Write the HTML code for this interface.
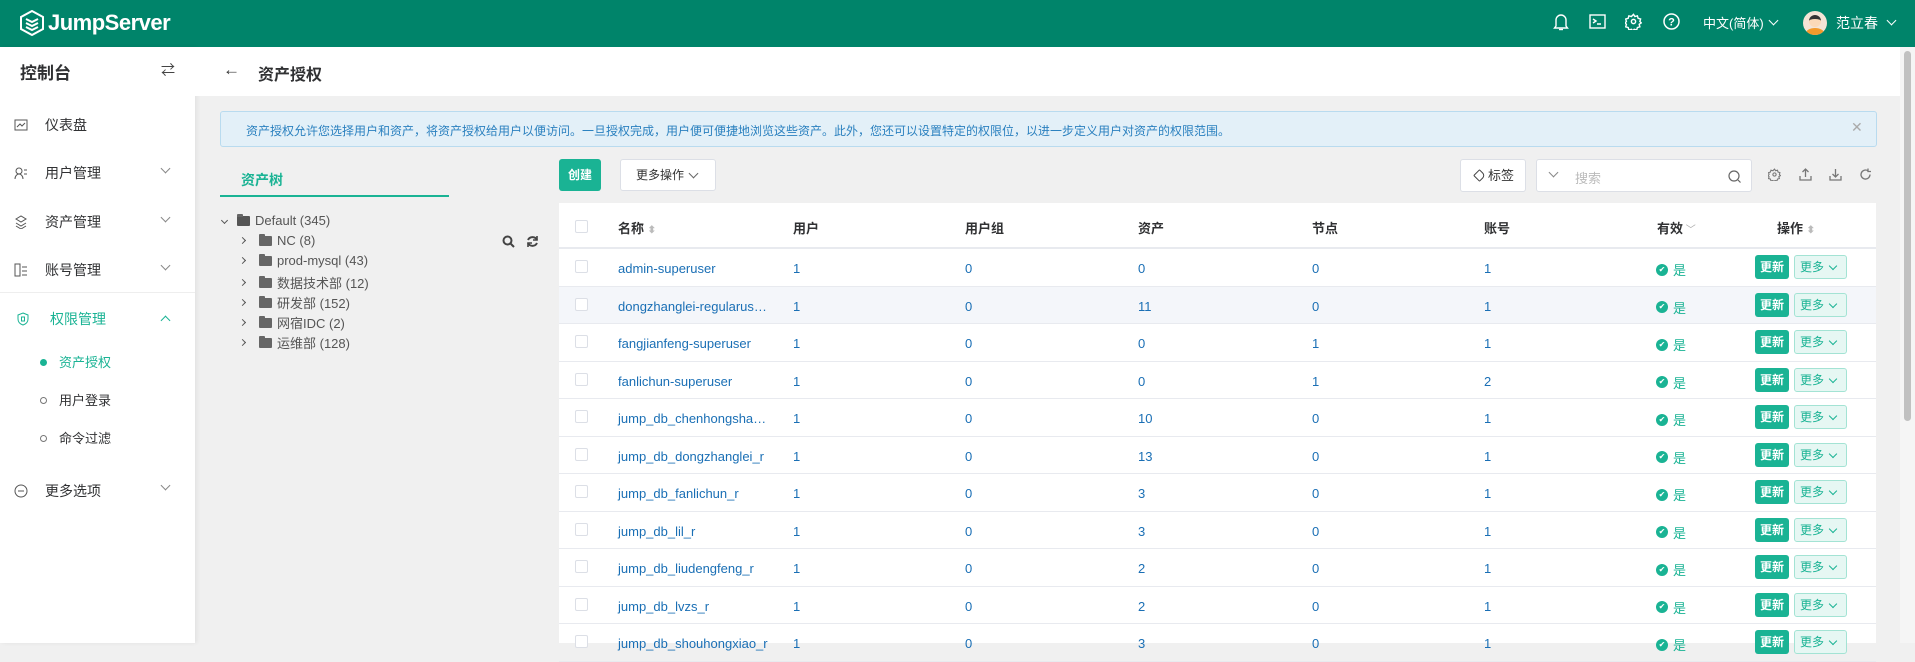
<!DOCTYPE html>
<html><head><meta charset="utf-8"><style>
*{box-sizing:border-box;margin:0;padding:0}
body{width:1915px;height:643px;overflow:hidden;background:#f0f0f0;font-family:"Liberation Sans","Noto Sans CJK SC",sans-serif;color:#606266;font-size:13px;position:relative}
.a{position:absolute}
.hdr{left:0;top:0;width:1915px;height:47px;background:#00846a}
.side{left:0;top:47px;width:195px;height:596px;background:#fff;box-shadow:2px 0 4px rgba(0,0,0,.06)}
.mi{position:absolute;left:14px;font-size:14px;color:#303133;display:flex;align-items:center}
.mi svg{margin-right:17px}
.chev{position:absolute;left:162px;width:7px;height:7px;border-right:1px solid #888;border-bottom:1px solid #888;transform:rotate(45deg)}
.sub{position:absolute;left:59px;font-size:13px;color:#303133}
.sub:before{content:"";position:absolute;left:-19px;top:7px;width:5px;height:5px;border:1px solid #777;border-radius:50%}
.sub.on:before{background:#1ab394;border-color:#1ab394}
.tree{font-size:13px;color:#555;position:absolute;left:0;display:flex;align-items:center}
.fold{display:inline-block;width:13px;height:10px;background:#666;border-radius:1px;margin-right:5px;position:relative}
.fold:before{content:"";position:absolute;left:0;top:-2px;width:6px;height:3px;background:#666;border-radius:1px 1px 0 0}
.tarr{display:inline-block;width:5px;height:5px;border-right:1.3px solid #555;border-bottom:1.3px solid #555;transform:rotate(-45deg);margin-right:14px}
.tbl{left:559px;top:203px;width:1317px;height:440px;background:#fff}
.row{position:absolute;left:0;width:1317px;height:37.5px;border-bottom:1px solid #e8eaef;font-size:13px}
.row span{position:absolute;top:12px;color:#1a6fb5}
.cb{position:absolute;left:16px;top:11px;width:13px;height:13px;border:1px solid #dcdfe6;border-radius:2px;background:#fff}
.row span.yes{color:#1ab394;left:1097px;top:11px;display:flex;align-items:center}
.yes:before{content:"✔";display:inline-block;width:12px;height:12px;border-radius:50%;background:#1ab394;color:#fff;font-size:8px;line-height:12px;text-align:center;margin-right:5px}
.b1{position:absolute;left:1196px;top:6px;width:34px;height:24px;background:#1ab394;border-radius:3px;color:#fff;font-size:12px;line-height:24px;text-align:center;font-weight:bold}
.b2{position:absolute;left:1235px;top:6px;width:53px;height:24px;background:#e6f7f3;border:1px solid #a3e3d4;border-radius:3px;color:#1ab394;font-size:12px;line-height:22px;padding-left:5px}
.b2:after{content:"";position:absolute;right:10px;top:7px;width:5px;height:5px;border-right:1px solid #1ab394;border-bottom:1px solid #1ab394;transform:rotate(45deg)}
.th{position:absolute;top:15px;font-size:13px;color:#303133;font-weight:bold}
</style></head><body>
<div class="a hdr">
 <svg class="a" style="left:20px;top:10px" width="24" height="26" viewBox="0 0 24 26"><path d="M12 1L23 7v12L12 25 1 19V7z" fill="none" stroke="#fff" stroke-width="2"/><path d="M6 9l6 3 6-3M6 13l6 3 6-3M6 17l6 3 6-3" stroke="#fff" stroke-width="2" fill="none"/></svg>
 <div class="a" style="left:48px;top:10px;color:#fff;font-size:22px;font-weight:bold;letter-spacing:-0.5px">JumpServer</div>
 <svg class="a" style="left:1553px;top:13px" width="16" height="18" viewBox="0 0 16 18" fill="none" stroke="#fff" stroke-width="1.4"><path d="M3 13V7a5 5 0 0110 0v6l1.5 2h-13z"/><path d="M6 16.5h4"/></svg>
 <svg class="a" style="left:1589px;top:14px" width="17" height="15" fill="none" stroke="#fff" stroke-width="1.4"><rect x="1" y="1" width="15" height="13"/><path d="M4 5l3 2-3 2M8 10h4"/></svg>
 <svg class="a" style="left:1625px;top:13px" width="17" height="17" viewBox="0 0 24 24" fill="none" stroke="#fff" stroke-width="2"><circle cx="12" cy="12" r="3"/><path d="M12 2l2 3 3.5-1 1 3.5 3.5 1-1 3.5 2 2-3 2 1 3.5-3.5 1-1 3.5-3.5-1-2 2-2-2-3.5 1-1-3.5-3.5-1 1-3.5-2-2 2-2-1-3.5 3.5-1 1-3.5 3.5 1z"/></svg>
 <svg class="a" style="left:1663px;top:13px" width="17" height="17" fill="none" stroke="#fff" stroke-width="1.5"><circle cx="8.5" cy="8.5" r="7.5"/><text x="8.5" y="12.5" fill="#fff" stroke="none" font-size="11" text-anchor="middle" font-family="Liberation Sans" font-weight="bold">?</text></svg>
 <div class="a" style="left:1703px;top:13px;color:#fff;font-size:13px">中文(简体)</div>
 <div class="a chev" style="left:1770px;top:17px;border-color:#fff"></div>
 <div class="a" style="left:1803px;top:11px;width:24px;height:24px;border-radius:50%;background:#f3e4d6;overflow:hidden"><div class="a" style="left:6px;top:4px;width:12px;height:12px;border-radius:50%;background:#fbd9b8;border-top:4px solid #333"></div><div class="a" style="left:3px;top:17px;width:18px;height:10px;border-radius:50%;background:#f39a2c"></div></div>
 <div class="a" style="left:1836px;top:13px;color:#fff;font-size:14px">范立春</div>
 <div class="a chev" style="left:1888px;top:17px;border-color:#fff"></div>
</div>
<div class="a side">
 <div class="a" style="left:20px;top:12px;font-size:17px;font-weight:bold;color:#303133">控制台</div>
 <div class="a" style="left:161px;top:13px;font-size:14px;color:#444">⇄</div>
 <div class="mi" style="top:68px"><svg width="14" height="14" fill="none" stroke="#555"><rect x="1" y="2" width="12" height="10"/><path d="M3 9l3-3 2 2 3-3"/></svg>仪表盘</div>
 <div class="mi" style="top:116px"><svg width="14" height="14" fill="none" stroke="#555"><circle cx="5" cy="5" r="3"/><path d="M1 13c0-3 2-5 4-5s4 2 4 5M10 4h3M10 8h3"/></svg>用户管理</div><div class="chev" style="top:118px"></div>
 <div class="mi" style="top:165px"><svg width="14" height="14" fill="none" stroke="#555"><path d="M2 4l5-3 5 3-5 3zM2 8l5 3 5-3M2 11l5 3 5-3"/></svg>资产管理</div><div class="chev" style="top:167px"></div>
 <div class="mi" style="top:213px"><svg width="14" height="14" fill="none" stroke="#555"><rect x="1" y="1" width="5" height="12"/><path d="M8 4h5M8 8h5M8 12h5"/></svg>账号管理</div><div class="chev" style="top:215px"></div>
 <div class="a" style="left:0;top:245px;width:195px;height:1px;background:#eee"></div>
 <div class="mi" style="top:262px;color:#1ab394;left:16px"><svg width="14" height="14" fill="none" stroke="#1ab394" style="margin-right:20px"><path d="M7 1l5 2v4c0 3-2 5-5 6-3-1-5-3-5-6V3z"/><rect x="5.5" y="5" width="3" height="4"/></svg>权限管理</div><div class="chev" style="top:270px;border-color:#1ab394;transform:rotate(-135deg)"></div>
 <div class="sub on" style="top:305px;color:#1ab394">资产授权</div>
 <div class="sub" style="top:343px">用户登录</div>
 <div class="sub" style="top:381px">命令过滤</div>
 <div class="mi" style="top:434px"><svg width="14" height="14" fill="none" stroke="#555"><circle cx="7" cy="7" r="6"/><path d="M4 7h6"/></svg>更多选项</div><div class="chev" style="top:435px"></div>
</div>
<div class="a" style="left:195px;top:47px;width:1705px;height:49px;background:#fff">
 <div class="a" style="left:28px;top:13px;font-size:17px;color:#333">←</div>
 <div class="a" style="left:63px;top:14px;font-size:16px;font-weight:bold;color:#303133">资产授权</div>
</div>
<div class="a" style="left:1900px;top:47px;width:15px;height:596px;background:#f5f5f5"><div class="a" style="left:4px;top:4px;width:7px;height:370px;background:#c1c1c1;border-radius:4px"></div></div>
<div class="a" style="left:220px;top:111px;width:1657px;height:36px;background:#e3f0f8;border:1px solid #b9dbef;border-radius:3px">
 <div class="a" style="left:25px;top:10px;font-size:12px;color:#2a80bf">资产授权允许您选择用户和资产，将资产授权给用户以便访问。一旦授权完成，用户便可便捷地浏览这些资产。此外，您还可以设置特定的权限位，以进一步定义用户对资产的权限范围。</div>
 <div class="a" style="left:1630px;top:7px;color:#aaa;font-size:14px">✕</div>
</div>
<div class="a" style="left:220px;top:158px;width:229px;height:39px;border-bottom:2px solid #1ab394"><div class="a" style="left:21px;top:12px;font-size:14px;font-weight:bold;color:#1ab394">资产树</div></div>
<div class="a" style="left:220px;top:213px;width:229px;height:150px">
 <div class="tree" style="top:0"><span class="tarr" style="transform:rotate(45deg);margin-left:2px;margin-right:10px"></span><span class="fold" style="background:#555"></span>Default (345)</div>
 <div class="tree" style="top:20px;left:20px"><span class="tarr"></span><span class="fold"></span>NC (8)</div>
 <div class="tree" style="top:40px;left:20px"><span class="tarr"></span><span class="fold"></span>prod-mysql (43)</div>
 <div class="tree" style="top:60px;left:20px"><span class="tarr"></span><span class="fold"></span>数据技术部 (12)</div>
 <div class="tree" style="top:80px;left:20px"><span class="tarr"></span><span class="fold"></span>研发部 (152)</div>
 <div class="tree" style="top:100px;left:20px"><span class="tarr"></span><span class="fold"></span>网宿IDC (2)</div>
 <div class="tree" style="top:120px;left:20px"><span class="tarr"></span><span class="fold"></span>运维部 (128)</div>
 <svg class="a" style="left:282px;top:22px" width="13" height="13" fill="none" stroke="#444" stroke-width="2"><circle cx="5.5" cy="5.5" r="4"/><path d="M8.5 8.5l3.5 3.5"/></svg>
 <svg class="a" style="left:306px;top:22px" width="13" height="13" fill="none" stroke="#444" stroke-width="2"><path d="M11 5A5 5 0 0 0 2 5M2 8a5 5 0 0 0 9 0"/><path d="M11 1v4H7M2 12V8h4" stroke-width="1.6"/></svg>
</div>
<div class="a" style="left:559px;top:159px;width:42px;height:32px;background:#1ab394;border-radius:3px;color:#fff;font-size:12px;font-weight:bold;line-height:32px;text-align:center">创建</div>
<div class="a" style="left:620px;top:159px;width:96px;height:32px;background:#fff;border:1px solid #dcdfe6;border-radius:3px;font-size:12px;color:#333;line-height:30px;padding-left:15px">更多操作</div>
<div class="a chev" style="left:690px;top:170px;border-color:#666"></div>
<div class="a" style="left:1460px;top:159px;width:66px;height:33px;background:#fff;border:1px solid #dcdfe6;border-radius:3px;font-size:13px;color:#333;line-height:31px;padding-left:27px">标签</div>
<div class="a" style="left:1475px;top:171px;width:9px;height:9px;border:1.4px solid #444;border-radius:1px 4px 1px 1px;transform:rotate(45deg)"></div>
<div class="a" style="left:1536px;top:159px;width:216px;height:33px;background:#fff;border:1px solid #dcdfe6;border-radius:3px">
 <div class="a chev" style="left:13px;top:9px;border-color:#888"></div>
 <div class="a" style="left:38px;top:8px;color:#bbb;font-size:13px">搜索</div>
 <svg class="a" style="left:191px;top:10px" width="13" height="13" fill="none" stroke="#666" stroke-width="1.2"><circle cx="6" cy="6" r="5"/><path d="M10 10l2.5 2.5"/></svg>
</div>
<svg class="a" style="left:1768px;top:168px" width="13" height="13" viewBox="0 0 24 24" fill="none" stroke="#777" stroke-width="2"><circle cx="12" cy="12" r="3"/><path d="M12 2l2 3 3.5-1 1 3.5 3.5 1-1 3.5 2 2-3 2 1 3.5-3.5 1-1 3.5-3.5-1-2 2-2-2-3.5 1-1-3.5-3.5-1 1-3.5-2-2 2-2-1-3.5 3.5-1 1-3.5 3.5 1z"/></svg>
<svg class="a" style="left:1799px;top:168px" width="13" height="13" fill="none" stroke="#777" stroke-width="1.3"><path d="M6.5 9V1M3.5 4l3-3 3 3M1 8v4h11V8"/></svg>
<svg class="a" style="left:1829px;top:168px" width="13" height="13" fill="none" stroke="#777" stroke-width="1.3"><path d="M6.5 1v8M3.5 6l3 3 3-3M1 8v4h11V8"/></svg>
<svg class="a" style="left:1859px;top:168px" width="13" height="13" fill="none" stroke="#777" stroke-width="1.3"><path d="M11 6.5A4.5 4.5 0 1 1 9 2.8M9 0.5v3h3"/></svg>
<div class="a tbl">
 <div class="row" style="top:0;height:46px;border-bottom:2px solid #e8eaef">
  <div class="cb" style="top:17px"></div>
  <div class="th" style="left:59px">名称 <span style="color:#bbb;font-size:10px;position:static">⬍</span></div>
  <div class="th" style="left:234px">用户</div><div class="th" style="left:406px">用户组</div><div class="th" style="left:579px">资产</div><div class="th" style="left:753px">节点</div><div class="th" style="left:925px">账号</div>
  <div class="th" style="left:1098px">有效<span style="color:#aaa;font-weight:normal;font-size:10px;position:static"> ﹀</span></div>
  <div class="th" style="left:1218px">操作 <span style="color:#bbb;font-size:10px;position:static">⬍</span></div>
 </div>
 <div id="rows"></div>
</div>
<script>
var d=[["admin-superuser",0,0,1],["dongzhanglei-regularus…",11,0,1],["fangjianfeng-superuser",0,1,1],["fanlichun-superuser",0,1,2],["jump_db_chenhongsha…",10,0,1],["jump_db_dongzhanglei_r",13,0,1],["jump_db_fanlichun_r",3,0,1],["jump_db_lil_r",3,0,1],["jump_db_liudengfeng_r",2,0,1],["jump_db_lvzs_r",2,0,1],["jump_db_shouhongxiao_r",3,0,1]];
var h="";d.forEach(function(r,i){h+='<div class="row" style="top:'+(46+i*37.5)+'px;'+(i==1?'background:#f4f6fa':'')+'"><div class="cb"></div><span style="left:59px">'+r[0]+'</span><span style="left:234px">1</span><span style="left:406px">0</span><span style="left:579px">'+r[1]+'</span><span style="left:753px">'+r[2]+'</span><span style="left:925px">'+r[3]+'</span><span class="yes">是</span><div class="b1">更新</div><div class="b2">更多</div></div>'});
document.getElementById("rows").innerHTML=h;
</script>
</body></html>
